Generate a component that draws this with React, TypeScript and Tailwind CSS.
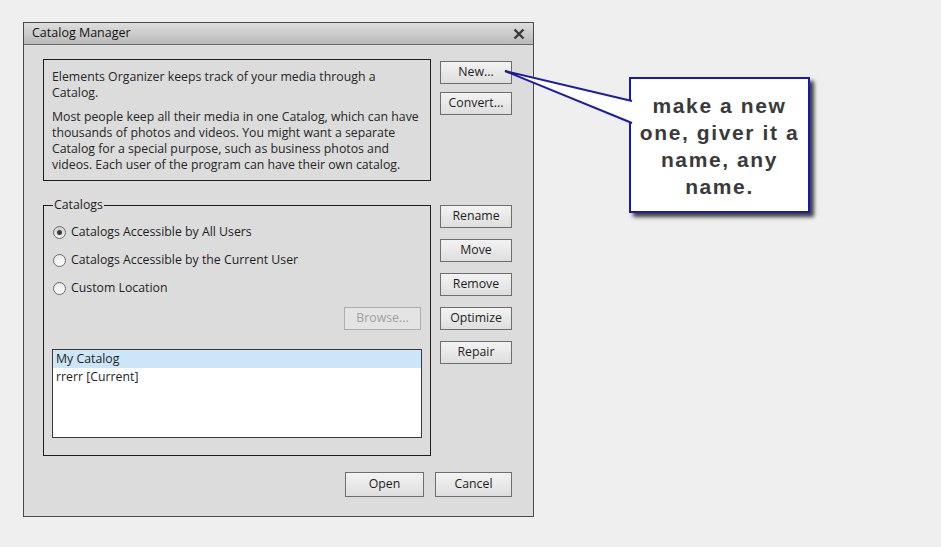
import React from "react";

const ui = { fontFamily: '"Open Sans", "Liberation Sans", Arial, sans-serif' };

function Btn({ label, w = "w-[72px]", h = "h-[23px]", disabled = false }: { label: string; w?: string; h?: string; disabled?: boolean }) {
  return (
    <div
      className={`${w} ${h} flex items-center justify-center border text-[12.3px] ${
        disabled
          ? "border-[#adadad] bg-[#e4e4e4] text-[#a0a0a0]"
          : "border-[#6e6e6e] bg-gradient-to-b from-[#f3f3f3] to-[#dedede] text-[#1e1e1e]"
      }`}
    >
      {label}
    </div>
  );
}

function Radio({ checked, label }: { checked?: boolean; label: string }) {
  return (
    <div className="flex items-center h-[16px] gap-[5px]">
      <div
        className={`w-[13px] h-[13px] rounded-full border flex items-center justify-center ${
          checked ? "border-[#6a6a6a] bg-gradient-to-b from-[#cfcfcf] to-[#f4f4f4]" : "border-[#6a6a6a] bg-gradient-to-b from-[#e9e9e9] to-[#ffffff]"
        }`}
      >
        {checked && <div className="w-[5px] h-[5px] rounded-full bg-[#3a3a3a]" />}
      </div>
      <span className="text-[12.3px] text-[#1e1e1e]">{label}</span>
    </div>
  );
}

export default function App() {
  return (
    <div className="relative w-[941px] h-[547px] bg-[#efefef] pl-[23px] pt-[22px]" style={ui}>
      {/* Dialog */}
      <div className="w-[511px] h-[495px] border border-[#4a4a4a] bg-[#dcdcdc] flex flex-col">
        <div className="h-[22px] shrink-0 flex items-center justify-between pl-[8px] pr-[8px] bg-gradient-to-b from-[#dedede] to-[#b9b9b9] border-b border-[#6a6a6a]">
          <span className="text-[12.5px] text-[#141414]">Catalog Manager</span>
          <svg width="12" height="12" viewBox="0 0 12 12">
            <path d="M1.5 1.5 L10.5 10.5 M10.5 1.5 L1.5 10.5" stroke="#3a3a3a" strokeWidth="2.4" />
          </svg>
        </div>

        <div className="flex pl-[19px] gap-[9px]">
          {/* Left column */}
          <div className="w-[388px] flex flex-col">
            <div className="mt-[14px] h-[122px] border border-[#1e1e1e] pl-[8px] pt-[9px] text-[12.3px] leading-[16px] text-[#262626]">
              <div>Elements Organizer keeps track of your media through a</div>
              <div>Catalog.</div>
              <div className="mt-[8px]">Most people keep all their media in one Catalog, which can have</div>
              <div>thousands of photos and videos. You might want a separate</div>
              <div>Catalog for a special purpose, such as business photos and</div>
              <div>videos. Each user of the program can have their own catalog.</div>
            </div>

            <fieldset className="mt-[17px] h-[258px] border border-[#1e1e1e] px-[8px] pb-[17px] flex flex-col">
              <legend className="ml-[1px] px-[1px] text-[12.3px] text-[#1e1e1e] leading-[14px]">Catalogs</legend>
              <div className="flex flex-col gap-[12px] mt-[12px] pl-[1px]">
                <Radio checked label="Catalogs Accessible by All Users" />
                <Radio label="Catalogs Accessible by the Current User" />
                <Radio label="Custom Location" />
              </div>
              <div className="flex justify-end mt-[11px] pr-[1px]">
                <Btn label="Browse..." w="w-[77px]" disabled />
              </div>
              <div className="mt-[19px] h-[89px] border border-[#3a3a3a] bg-white text-[12.3px] text-[#1e1e1e]">
                <div className="h-[18px] bg-[#cde6f7] pl-[3px] flex items-center">My Catalog</div>
                <div className="h-[18px] pl-[3px] flex items-center">rrerr [Current]</div>
              </div>
            </fieldset>
          </div>

          {/* Right column */}
          <div className="flex flex-col mt-[16px]">
            <div className="flex flex-col gap-[8px]">
              <Btn label="New..." />
              <Btn label="Convert..." />
            </div>
            <div className="flex flex-col gap-[11px] mt-[90px]">
              <Btn label="Rename" />
              <Btn label="Move" />
              <Btn label="Remove" />
              <Btn label="Optimize" />
              <Btn label="Repair" />
            </div>
          </div>
        </div>

        <div className="flex justify-end gap-[11px] pr-[21px] mt-[16px]">
          <Btn label="Open" w="w-[79px]" h="h-[25px]" />
          <Btn label="Cancel" w="w-[77px]" h="h-[25px]" />
        </div>
      </div>

      {/* Callout annotation */}
      <div className="absolute left-[629px] top-[77px] w-[181px] h-[136px] bg-white border-[2px] border-[#1b1ba6] shadow-[4px_4px_4px_rgba(0,0,0,0.75)] flex items-center justify-center">
        <div className="text-center font-bold text-[21px] leading-[27px] tracking-[1.6px] text-[#3a3a3a] pt-[1px]" style={{ fontFamily: '"Liberation Sans", Arial, sans-serif' }}>
          <div>make a new</div>
          <div>one, giver it a</div>
          <div>name, any</div>
          <div>name.</div>
        </div>
      </div>
      <svg className="absolute left-0 top-0 pointer-events-none" width="941" height="547">
        <polygon points="505,71 632,101 632,123" fill="#ffffff" />
        <path d="M632 101 L505 71 L632 123" fill="none" stroke="#1b1ba6" strokeWidth="2" />
      </svg>
    </div>
  );
}
